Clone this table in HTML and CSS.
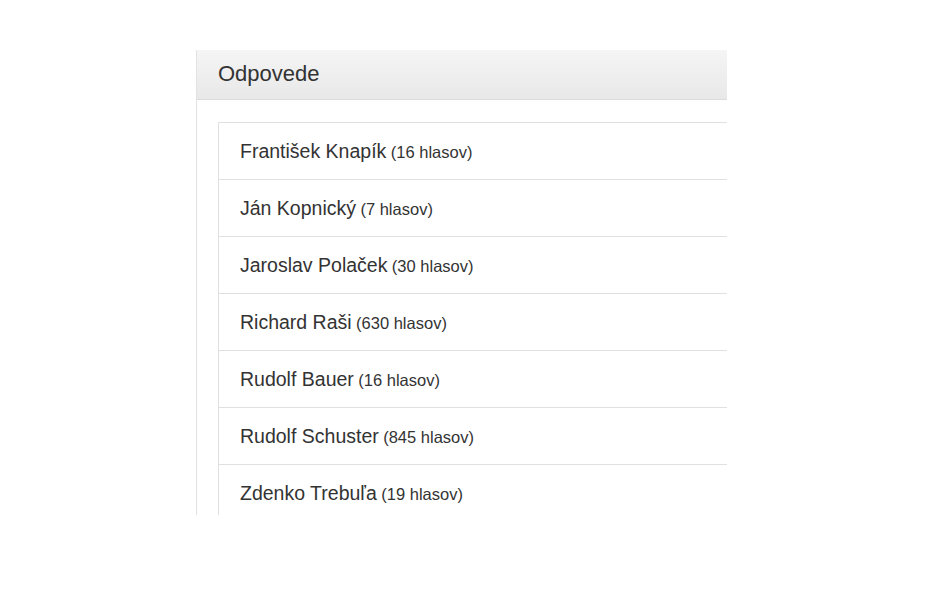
FILE: index.html
```html
<!DOCTYPE html>
<html>
<head>
<meta charset="utf-8">
<link rel="stylesheet" href="styles.css">
</head>
<body>
<div class="page">
  <div class="panel">
    <div class="panel-heading">Odpovede</div>
    <div class="panel-body">
      <ul class="list">
        <li class="item"><span class="name">František Knapík</span> <span class="count">(16 hlasov)</span></li>
        <li class="item"><span class="name">Ján Kopnický</span> <span class="count">(7 hlasov)</span></li>
        <li class="item"><span class="name">Jaroslav Polaček</span> <span class="count">(30 hlasov)</span></li>
        <li class="item"><span class="name">Richard Raši</span> <span class="count">(630 hlasov)</span></li>
        <li class="item"><span class="name">Rudolf Bauer</span> <span class="count">(16 hlasov)</span></li>
        <li class="item"><span class="name">Rudolf Schuster</span> <span class="count">(845 hlasov)</span></li>
        <li class="item"><span class="name">Zdenko Trebuľa</span> <span class="count">(19 hlasov)</span></li>
      </ul>
    </div>
  </div>
</div>
</body>
</html>
```
FILE: styles.css
```css
html, body {
  margin: 0;
  padding: 0;
  background: #fff;
}
body {
  font-family: "Liberation Sans", Arial, sans-serif;
  color: #333;
}
.page {
  padding: 50px 0 0 196px;
}
.panel {
  width: 531px;
  height: 465px;
  overflow: hidden;
  border-left: 1px solid #e2e2e2;
  box-sizing: border-box;
}
.panel-heading {
  height: 50px;
  box-sizing: border-box;
  padding: 0 21px;
  line-height: 48px;
  font-size: 22px;
  color: #333;
  background: linear-gradient(to bottom, #f5f5f5 0%, #e8e8e8 100%);
  border-bottom: 1px solid #dcdcdc;
}
.panel-body {
  padding: 22px 0 0 21px;
}
.list {
  list-style: none;
  margin: 0;
  padding: 0;
  border-top: 1px solid #e0e0e0;
  border-left: 1px solid #e0e0e0;
}
.item {
  height: 56px;
  line-height: 57px;
  padding: 0 21px;
  border-bottom: 1px solid #e0e0e0;
  white-space: nowrap;
}
.name {
  font-size: 19.5px;
  color: #333;
}
.count {
  font-size: 16.5px;
  color: #333;
}
```
